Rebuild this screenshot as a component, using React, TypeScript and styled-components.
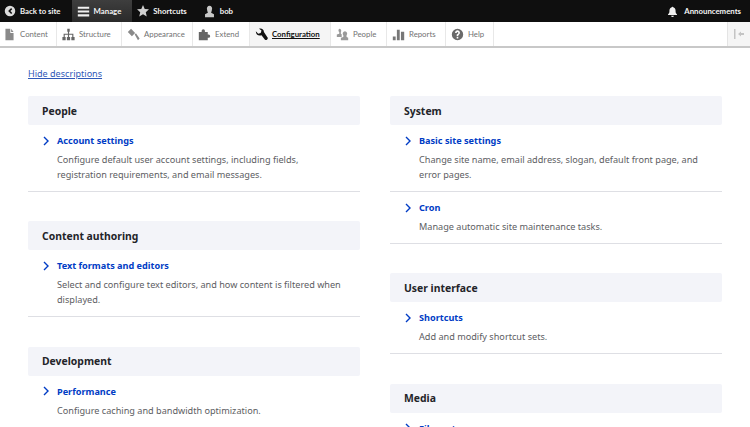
import styled, { createGlobalStyle } from 'styled-components';
import { ReactNode } from 'react';

const GlobalStyle = createGlobalStyle`
  html, body {
    margin: 0;
    padding: 0;
    width: 750px;
    height: 427px;
    overflow: hidden;
    background: #ffffff;
    font-family: "Noto Sans", sans-serif;
  }
`;

const TopBar = styled.div`
  display: flex;
  align-items: stretch;
  height: 22px;
  background: #0f0f0f;
  font-family: Lato, sans-serif;
  font-size: 7.8px;
  font-weight: 700;
  color: #f4f4f4;
`;

const TopItem = styled.a<{ $active?: boolean; $push?: boolean }>`
  display: flex;
  align-items: center;
  gap: ${p => (p.$push ? '6px' : '4px')};
  padding: 0 ${p => (p.$push ? '9px' : '11px')} 0 5px;
  margin-left: ${p => (p.$push ? 'auto' : '0')};
  background: ${p => (p.$active ? 'linear-gradient(#3e3e3e, #2a2a2a)' : 'transparent')};

  &:first-child {
    padding-left: 4px;
  }
`;

const Tray = styled.div`
  display: flex;
  align-items: stretch;
  height: 24px;
  background: #ffffff;
  border-bottom: 2px solid #c8c8c8;
  font-family: Lato, sans-serif;
  font-size: 7.8px;
  color: #727272;
`;

const TrayItem = styled.a<{ $active?: boolean; $width: number; $inset: number }>`
  display: flex;
  align-items: center;
  gap: 4px;
  width: ${p => p.$width}px;
  box-sizing: border-box;
  padding-left: ${p => p.$inset}px;
  border-right: 1px solid #e8e8e8;
  background: ${p => (p.$active ? '#f5f5f5' : 'transparent')};
  color: ${p => (p.$active ? '#111' : 'inherit')};
  font-weight: ${p => (p.$active ? 700 : 400)};
  text-decoration: ${p => (p.$active ? 'underline' : 'none')};
`;

const TrayToggle = styled.div`
  margin-left: auto;
  width: 22px;
  display: flex;
  align-items: center;
  justify-content: center;
  background: #f5f5f5;
  border-left: 1px solid #e4e4e4;
`;

const Main = styled.main`
  padding: 18px 28px 0;
`;

const HideLink = styled.a`
  display: block;
  font-size: 9.05px;
  line-height: 15px;
  color: #3059b8;
  text-decoration: underline;
  margin-bottom: 15px;
`;

const Columns = styled.div`
  display: grid;
  grid-template-columns: 332px 332px;
  column-gap: 30px;
`;

const Column = styled.div`
  display: flex;
  flex-direction: column;
  gap: 29.25px;
`;

const Panel = styled.section``;

const PanelTitle = styled.h3`
  margin: 0;
  height: 29px;
  padding-left: 14px;
  display: flex;
  align-items: center;
  background: #f3f4f9;
  border-radius: 2px;
  font-size: 10.4px;
  font-weight: 700;
  color: #232429;
`;

const Entry = styled.div`
  padding: 8px 14px 9px;
  border-bottom: 1px solid #dedfe4;
`;

const EntryLink = styled.a`
  display: flex;
  align-items: center;
  gap: 7px;
  height: 15px;
  font-size: 9.15px;
  font-weight: 700;
  color: #003cc5;
`;

const EntryText = styled.p`
  margin: 4px 0 0 15px;
  font-size: 9.15px;
  line-height: 15px;
  color: #5c5d62;
`;

const Chevron = () => (
  <svg width="8" height="10" viewBox="0 0 8 10" fill="none" stroke="#003cc5" strokeWidth="1.4">
    <path d="M2 1l4 4-4 4" />
  </svg>
);

const Icon = ({ size = 12, color = '#dcdcdc', children }: { size?: number; color?: string; children: ReactNode }) => (
  <svg width={size} height={size} viewBox="0 0 16 16" fill={color} style={{ flexShrink: 0 }}>
    {children}
  </svg>
);

const trayItems = [
  { label: 'Content', width: 57, inset: 3, color: '#8a8a8a', path: 'M3 1h6v5h4v9H3zM10 1l3 4h-3z' },
  { label: 'Structure', width: 65, inset: 5, color: '#666', path: 'M6.500 1h3v3.500h-3zM7.300 4.500h1.400V7H7.300zM2 7h12v1.400H2zM2 8.400h1.400V11H2zM7.300 8.400h1.400V11H7.300zM12.600 8.400H14V11h-1.400zM.5 11h4v4h-4zM6 11h4v4H6zM11.500 11h4v4h-4z' },
  { label: 'Appearance', width: 71, inset: 5, color: '#8a8a8a', path: 'M5 1l5 5-4 4-5-5zM9.500 8L11 6.500l4.500 6.500-2 2z' },
  { label: 'Extend', width: 57, inset: 5, color: '#666', path: 'M1 5h3.500V3.500a2 2 0 0 1 4 0V5H12v3h1a2 2 0 0 1 0 4h-1v3H1z' },
  { label: 'Configuration', width: 81, inset: 5, active: true, color: '#111', path: 'M1 4l3 3 3-1 1-3-3-2c3-1 6 1 6 4l4 6a2 2 0 0 1-3 3L8 9C4 10 1 8 1 4z' },
  { label: 'People', width: 56, inset: 5, color: '#9a9a9a', path: 'M4 1a2.500 2.500 0 0 1 2 4v2l1 .6V11H1V8l3-1V5a2.500 2.500 0 0 1 0-4zM11 4a3 3 0 0 1 2 5v2l2 1v3H6v-3l3-1V9a3 3 0 0 1 2-5z' },
  { label: 'Reports', width: 59, inset: 5, color: '#777', path: 'M1 10.500h3.500V15H1zM6 2h3.500v13H6zM11 4.500h4V15h-4z' },
  { label: 'Help', width: 48, inset: 5, color: '#6a6a6a', path: 'M8 1a7 7 0 1 0 0 14A7 7 0 0 0 8 1zM7 11h2v2H7zM5 6a3 3 0 1 1 5 2L9 9v1H7V8l1.500-1a1 1 0 1 0-1.500-1z' },
];

const sectionsLeft = [
  { title: 'People', entries: [{ link: 'Account settings', text: 'Configure default user account settings, including fields, registration requirements, and email messages.' }] },
  { title: 'Content authoring', entries: [{ link: 'Text formats and editors', text: 'Select and configure text editors, and how content is filtered when displayed.' }] },
  { title: 'Development', entries: [{ link: 'Performance', text: 'Configure caching and bandwidth optimization.' }] },
];

const sectionsRight = [
  {
    title: 'System',
    entries: [
      { link: 'Basic site settings', text: 'Change site name, email address, slogan, default front page, and error pages.' },
      { link: 'Cron', text: 'Manage automatic site maintenance tasks.' },
    ],
  },
  { title: 'User interface', entries: [{ link: 'Shortcuts', text: 'Add and modify shortcut sets.' }] },
  { title: 'Media', entries: [{ link: 'File system', text: 'Tell Drupal where to store uploaded files.' }] },
];

const renderColumn = (sections: typeof sectionsLeft) => (
  <Column>
    {sections.map(section => (
      <Panel key={section.title}>
        <PanelTitle>{section.title}</PanelTitle>
        {section.entries.map(entry => (
          <Entry key={entry.link}>
            <EntryLink><Chevron />{entry.link}</EntryLink>
            <EntryText>{entry.text}</EntryText>
          </Entry>
        ))}
      </Panel>
    ))}
  </Column>
);

const App = () => (
  <>
    <GlobalStyle />
    <TopBar>
      <TopItem>
        <Icon><path fillRule="evenodd" d="M8 1a7 7 0 1 1 0 14A7 7 0 0 1 8 1zm1.500 3L5.500 8l4 4 1.500-1.500L8.500 8 11 5.500z" /></Icon>
        Back to site
      </TopItem>
      <TopItem $active>
        <Icon size={13} color="#f0f0f0"><path d="M1 2h14v2.500H1zM1 6.800h14v2.500H1zM1 11.500h14V14H1z" /></Icon>
        Manage
      </TopItem>
      <TopItem>
        <Icon color="#cfcfcf"><path d="M8 0l2.300 5.300 5.700.5-4.300 3.800 1.300 5.600L8 12.300l-5 2.900 1.300-5.600L0 5.800l5.700-.5z" /></Icon>
        Shortcuts
      </TopItem>
      <TopItem>
        <Icon size={13} color="#c8c8c8"><path d="M8 1a3.300 3.300 0 0 1 3 4.500c0 2-1 3-1 4l3.500 2V15h-11v-3.500l3.500-2c0-1-1-2-1-4A3.300 3.300 0 0 1 8 1z" /></Icon>
        bob
      </TopItem>
      <TopItem $push>
        <Icon size={11} color="#f0f0f0"><path d="M8 1a1.500 1.500 0 0 1 1.500 1.200C12 3 12.500 5 12.500 8c0 2 1 3 2 4v1h-13v-1c1-1 2-2 2-4 0-3 .5-5 3-5.800A1.500 1.500 0 0 1 8 1zM6 14h4a2 2 0 0 1-4 0z" /></Icon>
        Announcements
      </TopItem>
    </TopBar>
    <Tray>
      {trayItems.map(item => (
        <TrayItem key={item.label} $width={item.width} $inset={item.inset} $active={item.active}>
          <Icon size={13} color={item.color}><path fillRule={item.label === 'Help' ? 'evenodd' : 'nonzero'} d={item.path} /></Icon>
          <span>{item.label}</span>
        </TrayItem>
      ))}
      <TrayToggle>
        <svg width="12" height="10" viewBox="0 0 12 10" fill="#c4c4c4">
          <path d="M1 0h1.500v10H1zM5 5l3-2.500V4h3v2H8v1.500z" />
        </svg>
      </TrayToggle>
    </Tray>
    <Main>
      <HideLink>Hide descriptions</HideLink>
      <Columns>
        {renderColumn(sectionsLeft)}
        {renderColumn(sectionsRight)}
      </Columns>
    </Main>
  </>
);

export default App;
